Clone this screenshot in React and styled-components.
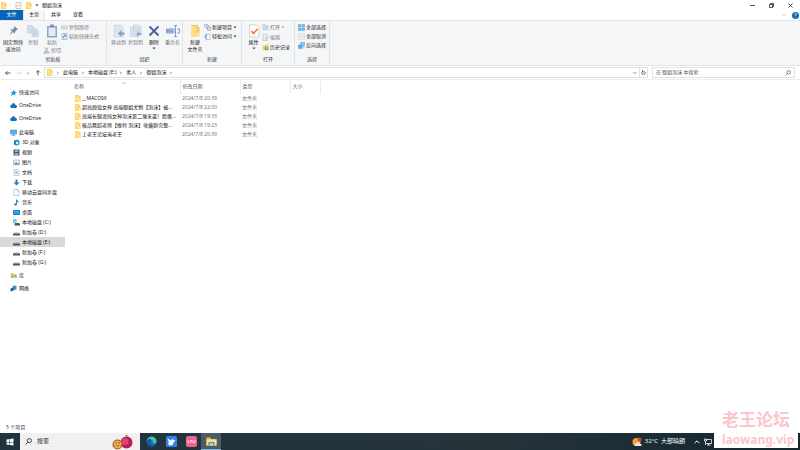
import React from 'react';
import styled, { createGlobalStyle } from 'styled-components';

const GlobalStyle = createGlobalStyle`
  * {
    box-sizing: border-box;
  }

  body {
    margin: 0;
    background: #fff;
    color: #111;
    font-family: "Open Sans", "Noto Sans CJK SC", sans-serif;
    font-size: 5px;
    line-height: 7px;
  }

  button, input {
    margin: 0;
    padding: 0;
    border: 0;
    background: none;
    color: inherit;
    font: inherit;
  }

  a {
    color: inherit;
    text-decoration: none;
  }

  svg {
    display: block;
    flex: none;
  }
`;

const Window = styled.div`
  display: flex;
  flex-direction: column;
  min-height: 100vh;
`;

const TitleBar = styled.header`
  display: flex;
  align-items: center;
  height: 10px;
`;

const QuickTools = styled.div`
  display: flex;
  align-items: center;
  gap: 3px;
  width: 42px;
`;

const Title = styled.h1`
  flex: 1;
  margin: 0;
  font-size: 5px;
  font-weight: 400;
`;

const WindowButtons = styled.div`
  display: flex;
`;

const WindowButton = styled.button`
  display: flex;
  align-items: center;
  justify-content: center;
  width: 19px;
  height: 9px;
`;

const Tabs = styled.nav`
  display: flex;
  align-items: center;
  height: 10px;
`;

const Tab = styled.button`
  width: ${(p) => (p.$file ? 23 : 22)}px;
  height: 10px;
  padding-bottom: 1px;
  color: ${(p) => (p.$file ? '#fff' : '#111')};
  background: ${(p) => (p.$file ? '#0864b5' : p.$active ? '#f7f8f9' : 'transparent')};
  border: solid #e2e4e6;
  border-width: ${(p) => (p.$active ? '0 1px' : '0')};
`;

const TabsEnd = styled.div`
  display: flex;
  align-items: center;
  gap: 6px;
  margin-left: auto;
  padding-right: 1px;
`;

const Ribbon = styled.section`
  display: flex;
  height: 46px;
  background: #f5f6f7;
  border: solid #e3e4e5;
  border-width: 1px 0;
`;

const Group = styled.div`
  display: flex;
  flex-direction: column;
  width: ${(p) => p.$width}px;
  border-right: 1px solid #e2e4e6;
`;

const GroupTools = styled.div`
  display: flex;
  flex: 1;
  padding: 3px 0 0 3px;
`;

const GroupName = styled.div`
  height: 9px;
  color: #444;
  text-align: center;
`;

const BigButton = styled.button`
  display: flex;
  flex: none;
  flex-direction: column;
  align-items: center;
  width: ${(p) => p.$width || 18}px;
  gap: 1px;
  align-self: flex-start;
  color: ${(p) => (p.$muted ? '#7c7f84' : '#222')};
  white-space: nowrap;
`;

const Stack = styled.div`
  display: flex;
  flex-direction: column;
  gap: ${(p) => p.$gap || 2}px;
`;

const SmallButton = styled.button`
  display: flex;
  align-items: center;
  gap: 1px;
  height: 7px;
  color: ${(p) => (p.$muted ? '#75787c' : '#222')};
  white-space: nowrap;
`;

const AddressRow = styled.div`
  display: flex;
  align-items: center;
  height: 14px;
  padding-right: 5px;
  border-bottom: 1px solid #eee;
`;

const Arrows = styled.div`
  display: flex;
  align-items: center;
  justify-content: space-between;
  width: 44px;
  padding: 0 3px 0 5px;
`;

const AddressBox = styled.div`
  display: flex;
  flex: 1;
  align-items: center;
  height: 11px;
  border: 1px solid #e2e2e2;
`;

const Crumbs = styled.nav`
  display: flex;
  flex: 1;
  align-items: center;
  gap: 3px;
  padding-left: 1px;
`;

const AddressEnd = styled.button`
  display: flex;
  align-items: center;
  justify-content: center;
  width: 8px;
  height: 9px;
  border-left: ${(p) => (p.$line ? '1px solid #e2e2e2' : '0')};
`;

const SearchBox = styled.label`
  display: flex;
  align-items: center;
  width: 143px;
  height: 11px;
  margin-left: 4px;
  padding: 0 3px;
  border: 1px solid #e2e2e2;

  input {
    flex: 1;
    min-width: 0;
    outline: 0;
  }

  input::placeholder {
    color: #555;
    opacity: 1;
  }
`;

const Main = styled.main`
  display: flex;
  flex: 1;
`;

const Sidebar = styled.nav`
  width: 65px;
  padding-top: 7px;
`;

const NavLink = styled.a`
  display: flex;
  align-items: center;
  gap: 2px;
  height: 10px;
  margin-bottom: ${(p) => (p.$spaced ? 3 : 0)}px;
  padding-left: ${(p) => (p.$child ? 13 : 10)}px;
  background: ${(p) => (p.$selected ? '#d9d9d9' : 'transparent')};
  white-space: nowrap;

  &:nth-child(3) {
    margin-bottom: 4px;
  }
`;

const Files = styled.div`
  flex: 1;
  padding-left: 7px;
`;

const FileTable = styled.table`
  border-collapse: collapse;
  table-layout: fixed;
  width: 248px;
`;

const HeadCell = styled.th`
  width: ${(p) => p.$width}px;
  height: 14px;
  padding: 0 0 2px 2px;
  border-right: 1px solid #ececec;
  color: #4d586a;
  font-weight: 400;
  text-align: left;
`;

const HeadInner = styled.div`
  display: flex;
  align-items: center;
  justify-content: space-between;
  padding-right: 54px;

  svg {
    margin-bottom: 7px;
  }
`;

const Cell = styled.td`
  height: 9px;
  padding: 0 0 0 2px;
  color: ${(p) => (p.$dark ? '#111' : '#6d6d6d')};
  white-space: nowrap;
`;

const FileName = styled.div`
  display: flex;
  align-items: center;
  gap: 1px;
`;

const Status = styled.footer`
  height: 9px;
  padding-left: 6px;
  color: #334060;
`;

const Taskbar = styled.footer`
  display: flex;
  align-items: center;
  height: 17px;
  background: linear-gradient(90deg, #20343e, #26343a 60%, #12272e);
  color: #fff;
`;

const TaskButton = styled.button`
  display: flex;
  align-items: center;
  justify-content: center;
  width: 20px;
  height: 17px;
  background: ${(p) => (p.$active ? '#4c5c64' : 'transparent')};
  border-bottom: ${(p) => (p.$active ? '1px solid #76b9ed' : '0')};
`;

const TaskSearch = styled.label`
  display: flex;
  align-items: center;
  gap: 5px;
  width: 120px;
  height: 17px;
  margin-right: 1px;
  padding: 0 7px 0 5px;
  background: #f1f1f1;
  color: #222;
  font-size: 6px;

  input {
    flex: 1;
    min-width: 0;
    outline: 0;
  }

  input::placeholder {
    color: #222;
    opacity: 1;
  }
`;

const Tray = styled.div`
  display: flex;
  align-items: center;
  gap: 4px;
  margin-left: auto;
  padding-right: 88px;
`;

const Weather = styled.button`
  display: flex;
  align-items: center;
  gap: 3px;
  margin-right: 5px;
  font-size: 6px;
  white-space: nowrap;
`;

const Watermark = styled.div`
  position: fixed;
  right: 2px;
  bottom: 2px;
  width: 84px;
  padding: 2px 0 0 8px;
  background: #fff;
  color: #fbc5cb;
  font-weight: 700;
  white-space: nowrap;
`;

const WatermarkName = styled.div`
  font-family: "Liberation Sans", "Noto Sans CJK SC", sans-serif;
  font-size: 17px;
  line-height: 20px;
`;

const WatermarkSite = styled.div`
  font-family: "Noto Sans", sans-serif;
  font-size: 12px;
  line-height: 17px;
`;

const Line = ({ d, size = 5, color = '#555', width = 1 }) => (
  <svg width={size} height={size} viewBox="0 0 10 10" fill="none" stroke={color} strokeWidth={width * 1.6}>
    <path d={d} />
  </svg>
);

const Folder = ({ size = 7 }) => (
  <svg width={size} height={size} viewBox="0 0 14 14">
    <path d="M2 0h8v2h3v12H2z" fill="#f4cc5c" />
    <path d="M3 1h7v12H3z" fill="#ffdf82" />
    <path d="M10 8h2v6h-2z" fill="#ffeaae" />
  </svg>
);

const Magnifier = ({ size = 6, color = '#555' }) => (
  <svg width={size} height={size} viewBox="0 0 12 12" fill="none" stroke={color} strokeWidth="1.4">
    <circle cx="7.5" cy="4.5" r="3.5" />
    <path d="M5 7l-4 4" />
  </svg>
);

const Chevron = () => <Line d="M3 2l3 3-3 3" size={4} />;
const DropArrow = ({ color = '#444' }) => (
  <svg width="4" height="3" viewBox="0 0 8 6">
    <path d="M1 1h6L4 5z" fill={color} />
  </svg>
);

const bigIcons = {
  pin: <path d="M17 4l7 7-3 1-3 4v4l-4-4-7 7 5-9-4-3h5l3-3z" fill="#7d8c9b" />,
  copy: (
    <g fill="#d0dff1" stroke="#adc3de">
      <path d="M3 3h9l4 4v11H3z" />
      <path d="M12 10h9l4 4v11H12z" />
      <path d="M14 16h8M14 19h8M14 22h8" />
    </g>
  ),
  paste: (
    <g>
      <path d="M4 4h20v23H4z" fill="#8fa4c7" />
      <path d="M7 7h14v17H7z" fill="#e0eaf8" />
      <path d="M10 1h8v6h-8z" fill="#8996a7" />
    </g>
  ),
  move: (
    <g>
      <path d="M4 2h14l5 5v19H4z" fill="#dce5f0" stroke="#c5d0df" />
      <path d="M25 17h-6v-5l-7 7 7 7v-5h6z" fill="#809bc4" />
    </g>
  ),
  copyTo: (
    <g fill="#d8e3f1" stroke="#b5c6dc">
      <path d="M3 6h15v19H3z" />
      <path d="M9 2h11l4 4v15H9z" />
      <path d="M12 10h9M12 14h9" />
      <path d="M25 18h-5v-4l-6 6 6 6v-4h5z" fill="#91abd0" />
    </g>
  ),
  remove: <path d="M5 5l18 18M23 5L5 23" stroke="#4b6796" strokeWidth="4" />,
  rename: (
    <g fill="none" stroke="#819dc9" strokeWidth="2">
      <path d="M1 10h15v8H1zM22 10h5v8h-5M19 4v20M16 3h6M16 25h6" />
      <path d="M3 12h10v4H3z" fill="#9cb8df" />
    </g>
  ),
  folder: (
    <g>
      <path d="M7 2h13v4h3v20H7z" fill="#f3ca60" />
      <path d="M7 4h10v22H7z" fill="#ffdf85" />
      <path d="M18 17h5v9h-5z" fill="#ffe9aa" />
    </g>
  ),
  props: (
    <g>
      <path d="M5 2h14l5 5v19H5z" fill="#fff" stroke="#a9afb7" />
      <path d="M9 14l4 5 8-9" fill="none" stroke="#e87735" strokeWidth="3" />
    </g>
  ),
};

const BigIcon = ({ name }) => (
  <svg width="14" height="14" viewBox="0 0 28 28">{bigIcons[name]}</svg>
);

const smallIcons = {
  path: <path d="M1 4h12v6H1zM3 7h6" fill="#e9eef5" stroke="#94a6bf" />,
  shortcut: (
    <g>
      <path d="M2 1h10v12H2z" fill="#e2ecf8" stroke="#6f92c2" />
      <path d="M5 10c0-4 1-5 4-5M7 3l3 2-2 3" fill="none" stroke="#3e70b0" strokeWidth="1.5" />
    </g>
  ),
  cut: (
    <g fill="none" stroke="#8398b8" strokeWidth="1.4">
      <path d="M4 1l5 9M10 1L5 10" />
      <circle cx="4" cy="11" r="2" />
      <circle cx="10" cy="11" r="2" />
    </g>
  ),
  newItem: (
    <g fill="#fff" stroke="#6c8bad">
      <path d="M1 1h6v5H1z" />
      <path d="M5 3h5v6H5z" />
      <path d="M7 6h6v7H7z" fill="#d5e6f5" />
    </g>
  ),
  easy: (
    <g fill="none">
      <path d="M4 2h8v11H4z" fill="#fff" stroke="#8aa2ba" />
      <path d="M6 11c-5 0-5-6-1-6M3 3l3 2-3 2" stroke="#327fc6" strokeWidth="1.5" />
    </g>
  ),
  open: (
    <g fill="#e0eaf4" stroke="#94abc5">
      <path d="M2 1h4v11H2zM8 5h4v7H8z" />
      <path d="M8 3h5" />
    </g>
  ),
  edit: (
    <g fill="#e7eef6" stroke="#9ab0ca">
      <path d="M2 1h8v12H2z" />
      <path d="M6 10l6-6 1 2-6 5z" />
    </g>
  ),
  history: (
    <g>
      <path d="M1 3h5l1-2h6v11H1z" fill="#f0d370" />
      <circle cx="9" cy="9" r="4" fill="#70b344" />
      <path d="M9 6v3h2" fill="none" stroke="#fff" />
    </g>
  ),
  all: <path d="M1 1h5v5H1zM8 1h5v5H8zM1 8h5v5H1zM8 8h5v5H8z" fill="#8cc5f0" stroke="#3693d9" />,
  none: <path d="M1 1h5v5H1zM8 1h5v5H8zM1 8h5v5H1zM8 8h5v5H8z" fill="#f5f6f7" stroke="#a3adb6" strokeDasharray="1 1" />,
  invert: (
    <g stroke="#4b9bd8">
      <path d="M5 1h8v6H5z" fill="#8cc5f0" />
      <path d="M1 6h6v7H1z" fill="#4fa8e8" />
      <path d="M8 8h4v4H8z" fill="#fff" />
    </g>
  ),
  star: <path d="M8 1l1 4 5 1-4 3 1 4-4-2-6 3 3-5-2-3 4-1z" fill="#328ed5" />,
  cloud: <path d="M3 12c-4-1-3-6 0-6 1-5 7-4 8 0 4 0 4 6 0 6z" fill="#126fc2" />,
  pc: (
    <g>
      <path d="M1 2h12v8H1z" fill="#55b6ee" stroke="#3c7ba8" />
      <path d="M6 10h2v2h3v1H3v-1h3z" fill="#5d7182" />
    </g>
  ),
  cube: (
    <g>
      <path d="M2 3l6-2 5 2v8l-6 2-5-2z" fill="#27a6d5" />
      <path d="M2 3l5 2v8l-5-2z" fill="#1688be" />
      <path d="M6 6h4v4H6z" fill="#d9f6fd" />
    </g>
  ),
  video: (
    <g>
      <path d="M1 1h12v12H1z" fill="#50555d" />
      <path d="M4 2h6v4H4zM4 8h6v4H4z" fill="#8faec8" />
      <path d="M2 2v11M12 2v11" stroke="#d8dce0" strokeDasharray="1 2" />
    </g>
  ),
  image: (
    <g>
      <path d="M1 2h12v10H1z" fill="#e9f1f7" stroke="#8495a2" />
      <path d="M2 11l4-5 3 3 3-1v3z" fill="#4c88b4" />
    </g>
  ),
  doc: (
    <g stroke="#8fa1b2">
      <path d="M2 1h8l2 2v10H2z" fill="#f9fcff" />
      <path d="M4 5h6M4 7h6M4 9h6" stroke="#679bc8" />
    </g>
  ),
  down: <path d="M5 1h4v6h4l-6 6-6-6h4z" fill="#2181d4" />,
  blank: <path d="M2 1h7l3 3v9H2zM9 1v3h3" fill="#fff" stroke="#999" />,
  music: (
    <g fill="#1d92d3">
      <circle cx="5" cy="11" r="2.5" />
      <path d="M6 1h2c1 3 5 3 3 8 0-3-2-3-3-4v6H6z" />
    </g>
  ),
  desktop: (
    <g>
      <path d="M0 2h14v10H0z" fill="#1688de" />
      <path d="M2 4h10v5H2z" fill="#36a5ef" />
    </g>
  ),
  drive: (
    <g>
      <path d="M3 7h8l3 2H0z" fill="#aaa" />
      <path d="M0 9h14v4H0z" fill="#555" />
    </g>
  ),
  winDrive: (
    <g>
      <path d="M4 8h8l2 2v3H3v-3z" fill="#555" />
      <path d="M0 1h3v3H0zM4 1h3v3H4zM0 5h3v3H0zM4 5h3v2H4z" fill="#24a5e8" />
    </g>
  ),
  library: (
    <g>
      <path d="M1 2h5l1 2h6v8H1z" fill="#f1ca61" />
      <path d="M4 7h9v5H4z" fill="#4caac3" />
      <path d="M6 9h5v4H6z" fill="#ffe39b" />
    </g>
  ),
  network: (
    <g>
      <path d="M5 2l8-1v8l-8 2z" fill="#3994d9" />
      <path d="M1 7l6-2v6l-6 2z" fill="#1762a7" />
    </g>
  ),
};

const SmallIcon = ({ name }) => (
  <svg width="7" height="7" viewBox="0 0 14 14">{smallIcons[name]}</svg>
);

const places = [
  { name: '快速访问', icon: 'star', spaced: true },
  { name: 'OneDrive', icon: 'cloud', spaced: true },
  { name: 'OneDrive', icon: 'cloud', spaced: true },
  { name: '此电脑', icon: 'pc' },
  { name: '3D 对象', icon: 'cube', child: true },
  { name: '视频', icon: 'video', child: true },
  { name: '图片', icon: 'image', child: true },
  { name: '文档', icon: 'doc', child: true },
  { name: '下载', icon: 'down', child: true },
  { name: '移动云盘同步盘', icon: 'blank', child: true },
  { name: '音乐', icon: 'music', child: true },
  { name: '桌面', icon: 'desktop', child: true },
  { name: '本地磁盘 (C:)', icon: 'winDrive', child: true },
  { name: '新加卷 (D:)', icon: 'drive', child: true },
  { name: '本地磁盘 (E:)', icon: 'drive', child: true, selected: true },
  { name: '新加卷 (F:)', icon: 'drive', child: true },
  { name: '新加卷 (G:)', icon: 'drive', child: true, spaced: true },
  { name: '库', icon: 'library', spaced: true },
  { name: '网络', icon: 'network' },
];

const files = [
  ['__MACOSX', '2024/7/8 20:39'],
  ['超高颜值女神 高端御姐尤物【泡沫】被...', '2024/7/8 22:00'],
  ['高端长腿清纯女神泡沫第二弹来袭！脸蛋...', '2024/7/8 19:33'],
  ['极品舞蹈老师【推特 泡沫】收藏群完整...', '2024/7/8 19:23'],
  ['上老王论坛当老王', '2024/7/8 20:39'],
];

const crumbs = ['此电脑', '本地磁盘 (E:)', '素人', '御姐泡沫'];

function RibbonBar() {
  return (
    <Ribbon>
      <Group $width={107}>
        <GroupTools>
          <BigButton $width={20}><BigIcon name="pin" /><span>固定到快<br />速访问</span></BigButton>
          <BigButton $width={20} $muted><BigIcon name="copy" />复制</BigButton>
          <Stack $gap={1}>
            <BigButton $muted><BigIcon name="paste" />粘贴</BigButton>
            <SmallButton $muted><SmallIcon name="cut" />剪切</SmallButton>
          </Stack>
          <Stack>
            <SmallButton $muted><SmallIcon name="path" />复制路径</SmallButton>
            <SmallButton $muted><SmallIcon name="shortcut" />粘贴快捷方式</SmallButton>
          </Stack>
        </GroupTools>
        <GroupName>剪贴板</GroupName>
      </Group>
      <Group $width={76}>
        <GroupTools>
          <BigButton $width={17} $muted><BigIcon name="move" />移动到</BigButton>
          <BigButton $width={17} $muted><BigIcon name="copyTo" />复制到</BigButton>
          <BigButton $width={20}><BigIcon name="remove" />删除<DropArrow /></BigButton>
          <BigButton $width={17} $muted><BigIcon name="rename" />重命名</BigButton>
        </GroupTools>
        <GroupName>组织</GroupName>
      </Group>
      <Group $width={59}>
        <GroupTools>
          <BigButton><BigIcon name="folder" /><span>新建<br />文件夹</span></BigButton>
          <Stack>
            <SmallButton><SmallIcon name="newItem" />新建项目<DropArrow /></SmallButton>
            <SmallButton><SmallIcon name="easy" />轻松访问<DropArrow /></SmallButton>
          </Stack>
        </GroupTools>
        <GroupName>新建</GroupName>
      </Group>
      <Group $width={53}>
        <GroupTools>
          <BigButton $width={17}><BigIcon name="props" />属性<DropArrow /></BigButton>
          <Stack $gap={3}>
            <SmallButton $muted><SmallIcon name="open" />打开<DropArrow color="#aaa" /></SmallButton>
            <SmallButton $muted><SmallIcon name="edit" />编辑</SmallButton>
            <SmallButton><SmallIcon name="history" />历史记录</SmallButton>
          </Stack>
        </GroupTools>
        <GroupName>打开</GroupName>
      </Group>
      <Group $width={35}>
        <GroupTools>
          <Stack>
            <SmallButton><SmallIcon name="all" />全部选择</SmallButton>
            <SmallButton><SmallIcon name="none" />全部取消</SmallButton>
            <SmallButton><SmallIcon name="invert" />反向选择</SmallButton>
          </Stack>
        </GroupTools>
        <GroupName>选择</GroupName>
      </Group>
    </Ribbon>
  );
}

function TaskbarRow() {
  return (
    <Taskbar>
      <TaskButton aria-label="开始">
        <svg width="8" height="8" viewBox="0 0 16 16" fill="#fff">
          <path d="M1 3l6-1v6H1zM8 2l7-1v7H8zM1 9h6v5l-6-1zM8 9h7v6l-7-1z" />
        </svg>
      </TaskButton>
      <TaskSearch>
        <Magnifier size={7} color="#222" />
        <input aria-label="搜索" placeholder="搜索" />
        <svg width="21" height="16" viewBox="0 0 42 32">
          <circle cx="29" cy="17" r="12" fill="#b51f57" />
          <circle cx="26" cy="15" r="7" fill="#d94479" />
          <path d="M29 7l-3-6 6 2z" fill="#6e8b34" />
          <circle cx="11" cy="21" r="10" fill="#9a5726" />
          <circle cx="11" cy="21" r="8" fill="#efb04b" />
          <path d="M7 17h3v3H7zM13 16h3v3h-3zM10 22h3v3h-3zM15 22h2v2h-2zM5 22h2v3H5z" fill="#a86a2c" />
        </svg>
      </TaskSearch>
      <TaskButton aria-label="Edge">
        <svg width="11" height="11" viewBox="0 0 22 22">
          <circle cx="11" cy="11" r="10" fill="#167bc3" />
          <path d="M1 11C2-2 21-2 21 11c-1 5-8 4-7 1 1-6-10-7-13-1z" fill="#49c9a0" />
          <path d="M1 11c2-6 9-6 9-2-3 4 1 10 8 9C11 25 1 20 1 11z" fill="#1259a7" />
        </svg>
      </TaskButton>
      <TaskButton aria-label="飞鸟">
        <svg width="11" height="11" viewBox="0 0 22 22">
          <rect width="22" height="22" rx="3" fill="#3481eb" />
          <path d="M3 5l7 4 5-5-1 4 5 1-4 4-2 5-6 1-3-4 2-2z" fill="#fff" />
        </svg>
      </TaskButton>
      <TaskButton aria-label="视频">
        <svg width="11" height="11" viewBox="0 0 22 22">
          <rect width="22" height="22" rx="4" fill="#f3628e" />
          <path d="M4 8v5h3M9 13V9h3v4M14 8v5h4V8" fill="none" stroke="#fff" strokeWidth="1.6" />
        </svg>
      </TaskButton>
      <TaskButton $active aria-label="文件资源管理器">
        <svg width="11" height="11" viewBox="0 0 22 22">
          <path d="M1 3h8l2 3h10v13H1z" fill="#eab546" />
          <path d="M1 7h20v12H1z" fill="#ffe083" />
          <path d="M5 12h12v7h-3v-4H8v4H5z" fill="#439bd6" />
        </svg>
      </TaskButton>
      <Tray>
        <Weather>
          <svg width="10" height="10" viewBox="0 0 20 20">
            <circle cx="9" cy="10" r="8" fill="#f5a42c" />
            <path d="M7 18c-4-1-2-6 2-5 2-5 8-2 7 1 5 0 4 4 0 4z" fill="#dce9f7" />
            <circle cx="15" cy="5" r="4" fill="#d94332" />
          </svg>
          <span>32°C</span>
          <span>大部晴朗</span>
        </Weather>
        <Line d="M1 7l4-4 4 4" size={6} color="#fff" />
        <svg width="8" height="8" viewBox="0 0 16 16" fill="none" stroke="#fff" strokeWidth="1.5">
          <path d="M4 3h11v8H4M9 11v3M6 14h7M1 2h4v4H1zM3 6v8" />
        </svg>
      </Tray>
    </Taskbar>
  );
}

function App() {
  return (
    <>
      <GlobalStyle />
      <Window>
        <TitleBar>
          <QuickTools>
            <Folder />
            <Line d="M2 1v8" size={2} color="#aaa" />
            <svg width="7" height="7" viewBox="0 0 14 14">
              <path d="M2 1h10v12H2z" fill="#fff" stroke="#999" />
              <path d="M4 7l2 2 4-4" fill="none" stroke="#d47945" strokeWidth="1.5" />
            </svg>
            <Folder />
            <DropArrow />
          </QuickTools>
          <Title>御姐泡沫</Title>
          <WindowButtons>
            <WindowButton aria-label="最小化"><Line d="M0 5h10" color="#222" /></WindowButton>
            <WindowButton aria-label="还原"><Line d="M1 3h6v6H1zM3 3V1h6v6H7" color="#222" /></WindowButton>
            <WindowButton aria-label="关闭"><Line d="M1 1l8 8M9 1L1 9" color="#222" /></WindowButton>
          </WindowButtons>
        </TitleBar>
        <Tabs>
          <Tab $file>文件</Tab>
          <Tab $active>主页</Tab>
          <Tab>共享</Tab>
          <Tab>查看</Tab>
          <TabsEnd>
            <Line d="M2 7l3-3 3 3" size={4} color="#999" />
            <svg width="7" height="7" viewBox="0 0 14 14">
              <circle cx="7" cy="7" r="7" fill="#0c6dbb" />
              <path d="M5 5c0-3 5-2 4 0L7 7v1M7 10v1" fill="none" stroke="#fff" strokeWidth="1.4" />
            </svg>
          </TabsEnd>
        </Tabs>
        <RibbonBar />
        <AddressRow>
          <Arrows>
            <Line d="M9 5H1M4 2L1 5l3 3" size={6} />
            <Line d="M1 5h8M6 2l3 3-3 3" size={6} color="#ddd" />
            <Line d="M2 4l3 3 3-3" size={4} />
            <Line d="M5 9V1M2 4l3-3 3 3" size={6} />
          </Arrows>
          <AddressBox>
            <Crumbs>
              <Folder />
              <Chevron />
              {crumbs.map((crumb) => (
                <React.Fragment key={crumb}>
                  <a href="#folder">{crumb}</a>
                  <Chevron />
                </React.Fragment>
              ))}
            </Crumbs>
            <AddressEnd aria-label="历史"><Line d="M1 3l4 4 4-4" size={4} /></AddressEnd>
            <AddressEnd $line aria-label="刷新"><Line d="M3 3a3.5 3.5 0 1 0 4 0M3 0v4h4" size={5} /></AddressEnd>
          </AddressBox>
          <SearchBox>
            <input aria-label="搜索文件夹" placeholder="在 御姐泡沫 中搜索" />
            <Magnifier />
          </SearchBox>
        </AddressRow>
        <Main>
          <Sidebar>
            {places.map((place, i) => (
              <NavLink key={i} href="#place" $child={place.child} $spaced={place.spaced} $selected={place.selected}>
                <SmallIcon name={place.icon} />
                {place.name}
              </NavLink>
            ))}
          </Sidebar>
          <Files>
            <FileTable>
              <thead>
                <tr>
                  <HeadCell $width={108}>
                    <HeadInner>名称<Line d="M2 7l3-3 3 3" size={4} color="#888" /></HeadInner>
                  </HeadCell>
                  <HeadCell $width={60}>修改日期</HeadCell>
                  <HeadCell $width={50}>类型</HeadCell>
                  <HeadCell $width={30}>大小</HeadCell>
                </tr>
              </thead>
              <tbody>
                {files.map(([name, date]) => (
                  <tr key={name}>
                    <Cell $dark><FileName><Folder />{name}</FileName></Cell>
                    <Cell>{date}</Cell>
                    <Cell>文件夹</Cell>
                    <Cell />
                  </tr>
                ))}
              </tbody>
            </FileTable>
          </Files>
        </Main>
        <Status>5 个项目</Status>
        <TaskbarRow />
      </Window>
      <Watermark>
        <WatermarkName>老王论坛</WatermarkName>
        <WatermarkSite>laowang.vip</WatermarkSite>
      </Watermark>
    </>
  );
}

export default App;
